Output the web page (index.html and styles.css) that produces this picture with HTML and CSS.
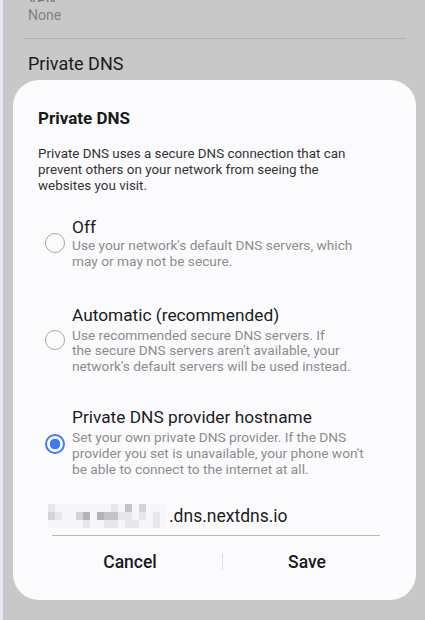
FILE: index.html
```html
<!DOCTYPE html>
<html>
<head>
<meta charset="utf-8">
<link rel="stylesheet" href="styles.css">
</head>
<body>
<div class="screen">
  <div class="strip"></div>
  <div class="bgpage">
    <div class="cut">VPN</div>
    <div class="none">None</div>
    <div class="divider"></div>
    <div class="bgtitle">Private DNS</div>
  </div>
  <div class="dialog">
    <div class="title">Private DNS</div>
    <div class="intro">Private DNS uses a secure DNS connection that can<br>prevent others on your network from seeing the<br>websites you visit.</div>
    <div class="option opt-off">
      <div class="radio"></div>
      <div class="otext">
        <div class="olabel">Off</div>
        <div class="odesc">Use your network's default DNS servers, which<br>may or may not be secure.</div>
      </div>
    </div>
    <div class="option opt-auto">
      <div class="radio"></div>
      <div class="otext">
        <div class="olabel">Automatic (recommended)</div>
        <div class="odesc">Use recommended secure DNS servers. If<br>the secure DNS servers aren't available, your<br>network's default servers will be used instead.</div>
      </div>
    </div>
    <div class="option opt-host">
      <div class="radio on"></div>
      <div class="otext">
        <div class="olabel">Private DNS provider hostname</div>
        <div class="odesc">Set your own private DNS provider. If the DNS<br>provider you set is unavailable, your phone won't<br>be able to connect to the internet at all.</div>
      </div>
    </div>
    <div class="field">
      <div class="pix">
        <i class="a"></i><i class="w"></i><i class="w"></i><i class="w"></i><i class="w"></i><i class="w"></i><i class="w"></i><i class="w"></i><i class="w"></i><i class="a"></i><i class="w"></i><i class="c"></i><i class="w"></i><i class="b"></i><i class="w"></i><i class="w"></i><i class="w"></i>
        <i class="b"></i><i class="a"></i><i class="w"></i><i class="w"></i><i class="b"></i><i class="d"></i><i class="w"></i><i class="d"></i><i class="c"></i><i class="c"></i><i class="a"></i><i class="a"></i><i class="w"></i><i class="a"></i><i class="w"></i><i class="a"></i><i class="w"></i>
        <i class="w"></i><i class="w"></i><i class="w"></i><i class="w"></i><i class="w"></i><i class="a"></i><i class="w"></i><i class="w"></i><i class="a"></i><i class="a"></i><i class="w"></i><i class="a"></i><i class="a"></i><i class="w"></i><i class="w"></i><i class="a"></i><i class="w"></i>
      </div>
      <span class="host">.dns.nextdns.io</span>
    </div>
    <div class="buttons">
      <div class="btn cancel">Cancel</div>
      <div class="vsep"></div>
      <div class="btn save">Save</div>
    </div>
  </div>
</div>
</body>
</html>
```
FILE: styles.css
```css
* { box-sizing: border-box; }
html, body { margin: 0; padding: 0; }
body {
  width: 425px;
  height: 620px;
  overflow: hidden;
  font-family: Roboto, "Noto Sans", sans-serif;
  background: #c8c8c8;
}
.screen {
  position: relative;
  width: 425px;
  height: 620px;
  background: #c8c8c8;
}
.strip {
  position: absolute;
  left: 0; top: 0;
  width: 3px; height: 620px;
  background: #e6e9f3;
}
.bgpage {
  padding: 0 19px 0 23px;
}
.cut {
  height: 2px;
  overflow: hidden;
  font-size: 14px;
  line-height: 0;
  color: #777;
  padding-left: 5px;
}
.none {
  padding-left: 5px;
  font-size: 14px;
  line-height: 17px;
  color: #838383;
  margin-top: 5px;
}
.divider {
  height: 1px;
  background: #b3b3b3;
  margin-top: 14px;
}
.bgtitle {
  padding-left: 5px;
  margin-top: 14px;
  font-size: 18px;
  line-height: 22px;
  color: #1c1c1c;
}
.dialog {
  position: absolute;
  left: 13px;
  top: 80px;
  width: 403px;
  height: 520px;
  background: #fbfbfd;
  border-radius: 26px;
  padding: 27px 25px 0 25px;
  color: #1e1e1e;
}
.title {
  font-size: 17px;
  font-weight: 700;
  line-height: 22px;
  color: #1a1a1a;
}
.intro {
  margin-top: 17px;
  font-size: 13.4px;
  line-height: 16px;
  color: #333;
}
.option {
  display: flex;
  align-items: center;
  gap: 7px;
  padding-left: 7px;
}
.opt-off { margin-top: 23px; }
.opt-auto { margin-top: 35px; }
.opt-host { margin-top: 32px; }
.opt-auto .odesc, .opt-host .odesc { margin-top: 2px; }
.radio {
  width: 20px;
  height: 20px;
  flex: none;
  border: 1.6px solid #a8a8a8;
  border-radius: 50%;
}
.opt-host .radio { margin-top: 4px; }
.radio.on {
  border: 2.2px solid #3e7bf4;
  background: radial-gradient(circle, #3e7bf4 0 5px, transparent 5.6px);
}
.olabel {
  font-size: 17.3px;
  line-height: 21px;
  color: #1c1c1c;
}
.odesc {
  font-size: 13.7px;
  line-height: 15.8px;
  color: #8c8c8c;
}
.field {
  margin: 20px 11px 0 14px;
  height: 39px;
  border-bottom: 1px solid #b8b8b8;
  display: flex;
  align-items: center;
}
.pix {
  display: grid;
  grid-template-columns: repeat(17, 7px);
  grid-auto-rows: 8px;
  margin-left: -4px;
}
.pix i { display: block; }
.pix .w { background: #f7f7f9; }
.pix .a { background: #e8e8ea; }
.pix .b { background: #d4d4d6; }
.pix .c { background: #c4c4c6; }
.pix .d { background: #b4b4b6; }
.host {
  font-size: 17.5px;
  color: #1c1c1c;
  margin-left: 2px;
}
.buttons {
  display: flex;
  align-items: center;
  margin-top: 6px;
  height: 40px;
}
.btn {
  text-align: center;
  font-size: 17.5px;
  font-weight: 500;
  color: #1a1a1a;
}
.cancel { width: 184px; flex: none; }
.save { flex: 1; }
.vsep {
  width: 1px;
  height: 16px;
  background: #dedede;
}
```
